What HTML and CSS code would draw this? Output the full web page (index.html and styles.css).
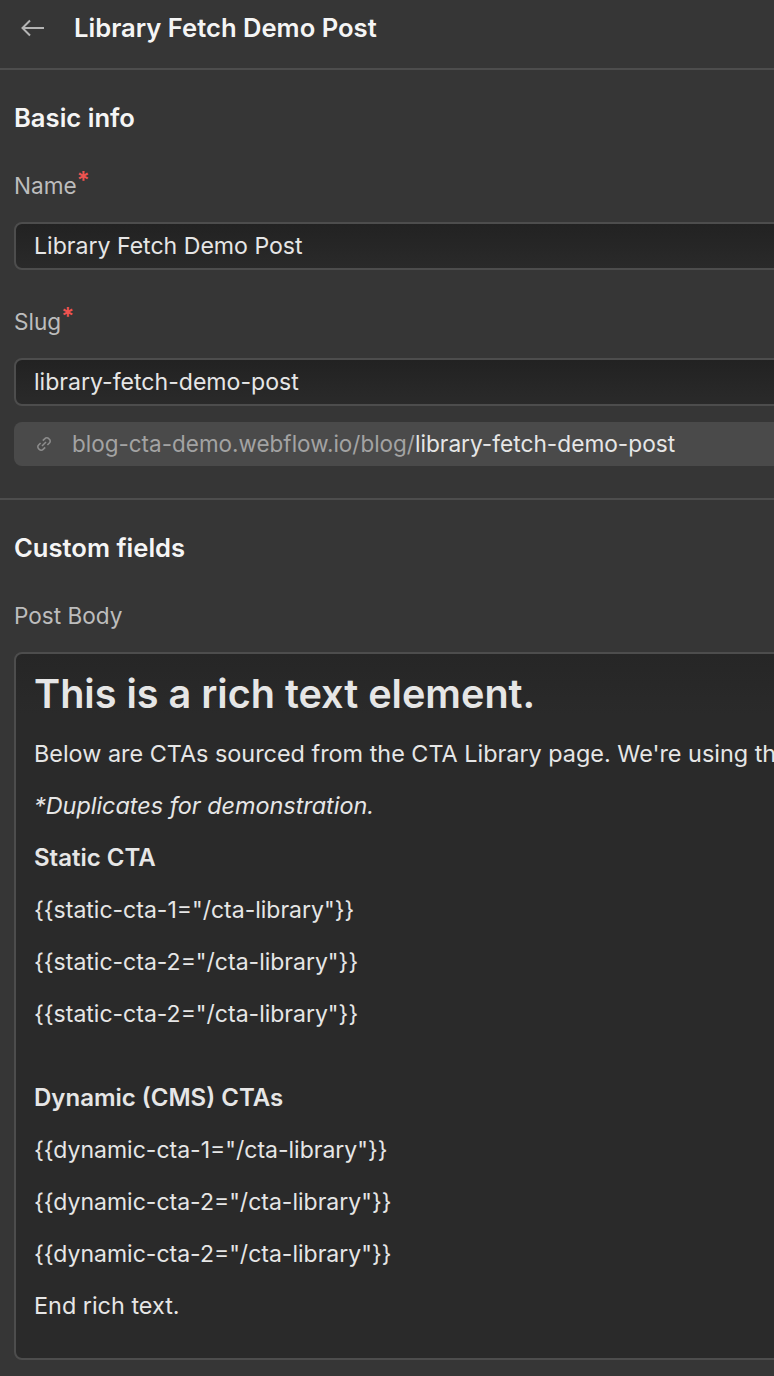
FILE: index.html
```html
<!DOCTYPE html>
<html lang="en">
<head>
  <meta charset="UTF-8" />
  <meta name="viewport" content="width=device-width, initial-scale=1.0"/>
  <title>Library Fetch Demo Post</title>
  <link rel="stylesheet" href="styles.css">
</head>
<body>
  <div class="panel">
    <!-- top bar -->
    <header class="top-bar">
      <svg class="back-icon" width="26" height="20" viewBox="0 0 26 20" fill="none" stroke="#b4b4b4" stroke-width="2">
        <path d="M24 10H3"/>
        <path d="M10 2.5L2.5 10L10 17.5"/>
      </svg>
      <h1 class="top-title">Library Fetch Demo Post</h1>
    </header>

    <section class="group group-basic">
      <h2 class="group-title">Basic info</h2>

      <div class="field">
        <div class="label">Name<span class="required">*</span></div>
        <div class="input">Library Fetch Demo Post</div>
      </div>

      <div class="field">
        <div class="label">Slug<span class="required">*</span></div>
        <div class="input">library-fetch-demo-post</div>
        <div class="slug-url">
          <svg class="link-icon" width="16" height="16" viewBox="0 0 16 16" fill="none" stroke="#8c8c8c" stroke-width="1.6">
            <path d="M6.8 4.6L8.9 2.6a2.6 2.6 0 0 1 3.8 0l.7.7a2.6 2.6 0 0 1 0 3.7l-2 2"/>
            <path d="M9.2 11.4L7.1 13.4a2.6 2.6 0 0 1-3.8 0l-.7-.7a2.6 2.6 0 0 1 0-3.7l2-2"/>
            <path d="M6 10l4-4"/>
          </svg>
          <span class="slug-base">blog-cta-demo.webflow.io/blog/</span><span class="slug-value">library-fetch-demo-post</span>
        </div>
      </div>
    </section>

    <section class="group group-custom">
      <h2 class="group-title">Custom fields</h2>

      <div class="field">
        <div class="label">Post Body</div>
        <div class="rich-text">
          <h3>This is a rich text element.</h3>
          <p>Below are CTAs sourced from the CTA Library page. We're using these tags to fetch them on the page.</p>
          <p><em>*Duplicates for demonstration.</em></p>
          <p><strong>Static CTA</strong></p>
          <p class="tag">{{static-cta-1="/cta-library"}}</p>
          <p class="tag">{{static-cta-2="/cta-library"}}</p>
          <p class="tag gap-after">{{static-cta-2="/cta-library"}}</p>
          <p><strong>Dynamic (CMS) CTAs</strong></p>
          <p class="tag">{{dynamic-cta-1="/cta-library"}}</p>
          <p class="tag">{{dynamic-cta-2="/cta-library"}}</p>
          <p class="tag">{{dynamic-cta-2="/cta-library"}}</p>
          <p>End rich text.</p>
        </div>
      </div>
    </section>
  </div>
</body>
</html>
```

FILE: styles.css
```css
html, body {
  margin: 0;
  height: 1376px;
  overflow: hidden;
}

body {
  background-color: #363636;
  font-family: Inter, "Liberation Sans", sans-serif;
  color: #f5f5f5;
}

.panel {
  width: 774px;
}

.top-bar {
  display: flex;
  align-items: center;
  height: 68px;
  padding-left: 20px;
  border-bottom: 2px solid #4d4d4d;
  width: 1000px;
}

.back-icon {
  margin-top: -13px;
  margin-right: 28px;
}

.top-title {
  margin: -13px 0 0;
  font-size: 25.6px;
  font-weight: 600;
  color: #f5f5f5;
}

.group {
  padding: 32px 0 0 14px;
  width: 1000px;
}

.group-basic {
  height: 396px;
  border-bottom: 2px solid #4d4d4d;
}

.group-title {
  margin: 0;
  font-size: 25.6px;
  line-height: 32px;
  font-weight: 600;
  color: #f5f5f5;
}

.field {
  margin-top: 36px;
}

.label {
  font-size: 22.6px;
  line-height: 32px;
  color: #bdbdbd;
  margin-bottom: 20px;
}

.required {
  color: #ef5350;
  font-size: 24px;
  font-weight: 600;
  line-height: 0;
  position: relative;
  top: -5px;
}

.input {
  height: 44px;
  line-height: 44px;
  padding-left: 18px;
  font-size: 23.08px;
  color: #e6e6e6;
  background: linear-gradient(#222222, #2a2a2a);
  border: 2px solid #4d4d4d;
  border-radius: 8px;
}

.slug-url {
  display: flex;
  align-items: center;
  height: 42px;
  margin-top: 16px;
  padding-left: 22px;
  padding-bottom: 2px;
  background-color: #4a4a4a;
  border-radius: 8px;
}

.link-icon {
  margin-top: 2px;
  margin-right: 20px;
}

.slug-base {
  font-size: 22.47px;
  color: #a3a3a3;
}

.slug-value {
  font-size: 22.7px;
  color: #e6e6e6;
}

.rich-text {
  height: 704px;
  padding: 0 18px;
  font-size: 23.4px;
  line-height: 36px;
  color: #e6e6e6;
  background: linear-gradient(#262626, #2a2a2a 60px);
  border: 2px solid #4d4d4d;
  border-radius: 8px;
  white-space: nowrap;
}

.rich-text h3 {
  margin: 14px 0 16px;
  font-size: 39.6px;
  line-height: 52px;
  font-weight: 600;
}

.rich-text p {
  margin: 0 0 16px;
}

.rich-text .tag {
  font-size: 23px;
}

.rich-text .gap-after {
  margin-bottom: 48px;
}

.rich-text strong {
  font-size: 24px;
  font-weight: 600;
}

.rich-text em {
  font-size: 23.4px;
}
```
